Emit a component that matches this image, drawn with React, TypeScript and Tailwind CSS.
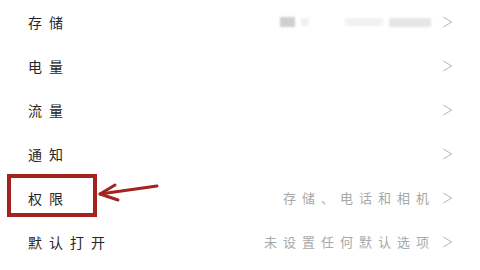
import React from 'react';

interface Row {
  label: string;
  value?: string;
  blurred?: boolean;
}

const rows: Row[] = [
  { label: '存储', blurred: true },
  { label: '电量' },
  { label: '流量' },
  { label: '通知' },
  { label: '权限', value: '存储、电话和相机' },
  { label: '默认打开', value: '未设置任何默认选项' },
];

const Chevron = () => (
  <svg width="11" height="12" viewBox="0 0 11 12" className="shrink-0">
    <polyline points="1.5,1 9.5,6 1.5,11" fill="none" stroke="#b5b5b5" strokeWidth="1" />
  </svg>
);

export default function App() {
  return (
    <div
      className="relative w-[480px] h-[270px] overflow-hidden bg-white"
      style={{ fontFamily: '"Noto Sans CJK SC", "Noto Sans", sans-serif' }}
    >
      <div className="flex flex-col">
        {rows.map((row) => (
          <div key={row.label} className="flex h-[44px] items-center pl-[28px] pr-[27px]">
            <span className="text-[14px] tracking-[7px] text-[#262626]">{row.label}</span>
            <div className="ml-auto flex items-center gap-[7px]">
              {row.value && (
                <span className="text-[13px] tracking-[6px] text-[#a8a8a8]">{row.value}</span>
              )}
              {row.blurred && (
                <div className="flex items-center gap-[6px] blur-[1px] mr-[4px]">
                  <div className="h-[10px] w-[15px] bg-[#cfcfcf]" />
                  <div className="h-[8px] w-[8px] bg-[#f0f0f0]" />
                  <div className="w-[24px]" />
                  <div className="h-[8px] w-[38px] bg-[#f1f1f1]" />
                  <div className="h-[9px] w-[42px] bg-[#e6e6e6]" />
                </div>
              )}
              <Chevron />
            </div>
          </div>
        ))}
      </div>

      {/* highlight box */}
      <div className="absolute left-[7px] top-[174px] h-[43px] w-[90px] border-[4px] border-[#a3231f]" />

      {/* arrow */}
      <svg className="absolute left-[96px] top-[180px]" width="66" height="24" viewBox="0 0 66 24">
        <line x1="4" y1="14" x2="61" y2="6" stroke="#a3231f" strokeWidth="3" strokeLinecap="round" />
        <polyline
          points="19,5 4,14 22,20"
          fill="none"
          stroke="#a3231f"
          strokeWidth="3"
          strokeLinecap="round"
          strokeLinejoin="round"
        />
      </svg>
    </div>
  );
}
